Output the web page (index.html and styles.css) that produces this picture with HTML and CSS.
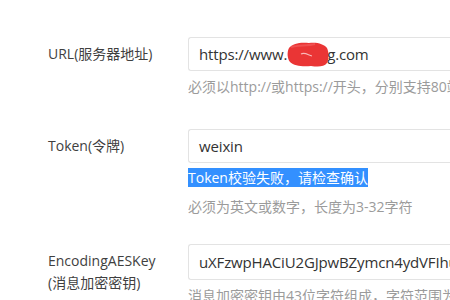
FILE: index.html
```html
<!DOCTYPE html>
<html lang="zh-CN">
<head>
<meta charset="utf-8">
<title>服务器配置</title>
<link rel="stylesheet" href="styles.css">
</head>
<body>
<div class="form">
  <div class="row row-url">
    <div class="label">URL(服务器地址)</div>
    <div class="field">
      <div class="input">https://www.<span class="blot"><svg width="42" height="27" viewBox="0 0 42 27"><path d="M2 7 C6 2 14 1 22 2 C30 1 37 3 40 7 C42 11 42 18 40 22 C37 26 31 26 24 25 C16 26 7 25 3 21 C0 17 0 11 2 7 Z" fill="#ea3535"/><path d="M4 6 C12 4 20 5 28 3" stroke="#f05050" stroke-width="2" fill="none"/><path d="M14 13 C18 11 21 14 25 15" stroke="#f8b8b8" stroke-width="1.2" fill="none"/></svg></span>g.com</div>
      <div class="help help-url">必须以http://或https://开头，分别支持80端口和443端口。</div>
    </div>
  </div>
  <div class="row row-token">
    <div class="label">Token(令牌)</div>
    <div class="field">
      <div class="input">weixin</div>
      <div class="error"><span class="selected">Token校验失败，请检查确认</span></div>
      <div class="help help-token">必须为英文或数字，长度为3-32字符</div>
    </div>
  </div>
  <div class="row row-key">
    <div class="label">EncodingAESKey<br>(消息加密密钥)</div>
    <div class="field">
      <div class="input input-tall">uXFzwpHACiU2GJpwBZymcn4ydVFIhuWnDbQrUyXpLeK</div>
      <div class="help">消息加密密钥由43位字符组成，字符范围为A-Z，a-z，0-9</div>
    </div>
  </div>
</div>
</body>
</html>
```
FILE: styles.css
```css
html, body {
  margin: 0;
  padding: 0;
  background: #ffffff;
  overflow: hidden;
}
body {
  font-family: "Open Sans", "Noto Sans CJK SC", sans-serif;
  color: #353535;
  width: 450px;
  height: 300px;
}
.form {
  padding: 37px 0 0 48px;
}
.row {
  display: flex;
  align-items: flex-start;
}
.row-url { margin-bottom: 33px; }
.row-token { margin-bottom: 28px; }
.label {
  width: 140px;
  flex: none;
  font-size: 14px;
  line-height: 22px;
  padding-top: 6px;
  color: #3f3f3f;
  white-space: nowrap;
}
.field {
  flex: 1;
  min-width: 0;
  overflow: hidden;
}
.input {
  box-sizing: border-box;
  width: 420px;
  height: 34px;
  border: 1px solid #e3e3e3;
  border-right: none;
  border-radius: 3px 0 0 3px;
  padding: 0 0 0 10px;
  font-size: 15px;
  line-height: 32px;
  color: #333;
  white-space: nowrap;
  overflow: hidden;
  letter-spacing: -0.15px;
}
.input-tall {
  height: 36px;
  line-height: 34px;
}
.blot {
  display: inline-block;
  width: 40px;
  height: 27px;
  vertical-align: middle;
  margin: -3px 0 0 0;
}
.blot svg {
  display: block;
}
.help {
  font-size: 14px;
  line-height: 18px;
  color: #9b9b9b;
  white-space: nowrap;
  margin-top: 7px;
}
.help-token {
  margin-top: 11px;
}
.error {
  margin-top: 5px;
  font-size: 14px;
  line-height: 19px;
}
.selected {
  background: #3390ff;
  color: #ffffff;
  display: inline-block;
  white-space: nowrap;
}
```
